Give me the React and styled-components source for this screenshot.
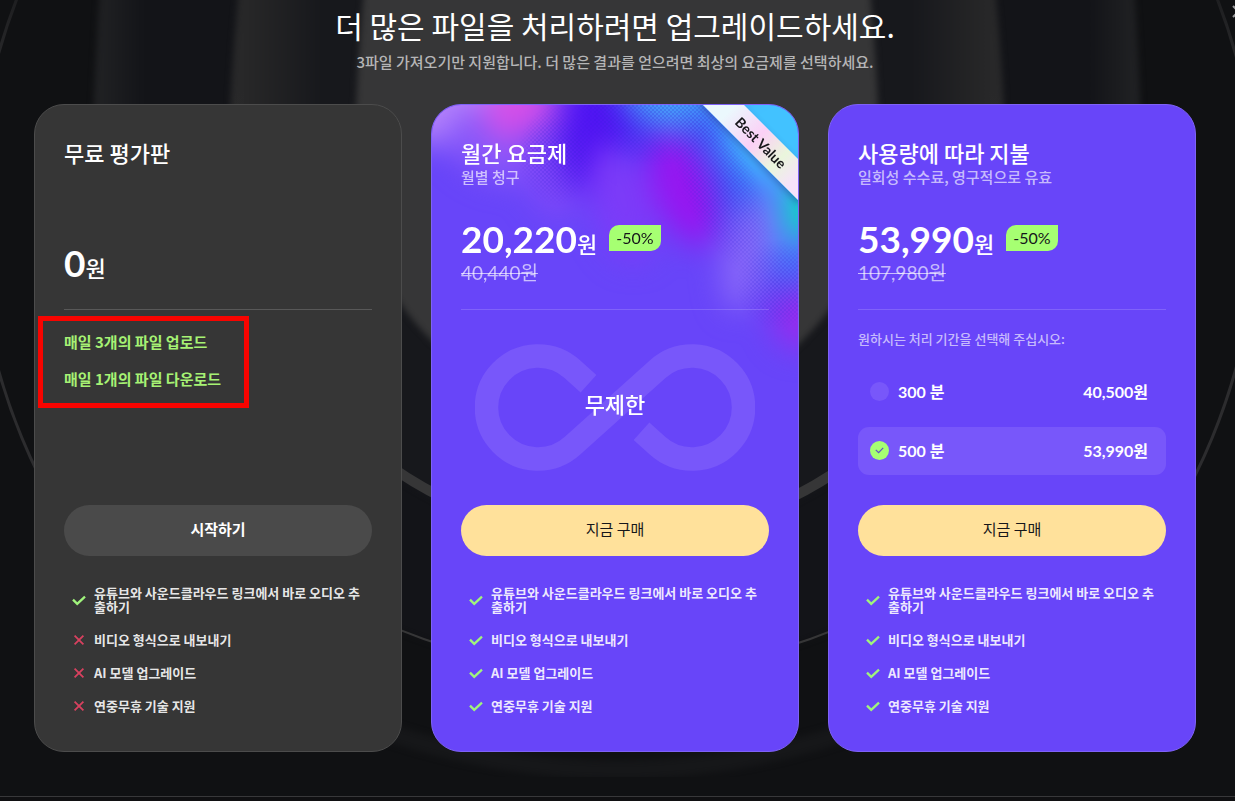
import { useState } from "react";
import styled, { createGlobalStyle, css } from "styled-components";

const GlobalStyle = createGlobalStyle`
    * {
        box-sizing: border-box;
        margin: 0;
        padding: 0;
    }

    body {
        background-color: #101012;
        font-family: "Noto Sans CJK KR", "Noto Sans", sans-serif;
        font-weight: 500;
        color: #fff;
        overflow-x: hidden;
    }

    ul {
        list-style: none;
    }

    button {
        font-family: inherit;
        border: 0;
        cursor: pointer;
    }
`;

const numberFont = css`
    font-family: Lato, "Noto Sans CJK KR", sans-serif;
`;

const Page = styled.main`
    position: relative;
    overflow: hidden;
    padding: 5px 39px 44px 34px;
    border-bottom: 1px solid #38383a;
`;

const Backdrop = styled.svg`
    position: absolute;
    top: 0;
    left: 0;
    width: 100%;
    height: 100%;
    z-index: -1;
`;

const CloseButton = styled.button`
    position: absolute;
    top: 4px;
    right: -11px;
    width: 14px;
    height: 14px;
    background: none;
    color: #9a9a9c;

    svg {
        display: block;
    }
`;

const Header = styled.header`
    text-align: center;
    margin-bottom: 32px;

    h1 {
        font-size: 30px;
        line-height: 40px;
        font-weight: 400;
    }

    p {
        margin-top: 7px;
        font-size: 15px;
        line-height: 20px;
        color: #b5b5b6;
    }
`;

const Plans = styled.div`
    display: grid;
    grid-template-columns: repeat(auto-fit, minmax(300px, 1fr));
    gap: 29px;
`;

const Card = styled.section`
    position: relative;
    display: flex;
    flex-direction: column;
    overflow: hidden;
    padding: 33px 29px 38px;
    border: 1px solid ${(props) => (props.$paid ? "#7e62f6" : "#4c4c4c")};
    border-radius: 30px;
    background-color: ${(props) => (props.$paid ? "#6845f9" : "#363636")};
`;

const GlowArt = styled.svg`
    position: absolute;
    top: 0;
    right: 0;
`;

const CardHead = styled.div`
    position: relative;
    display: flex;
    flex-direction: column;
    justify-content: space-between;
    min-height: 172px;
    padding-bottom: 24px;
    border-bottom: 1px solid ${(props) => (props.$paid ? "rgba(255, 255, 255, 0.16)" : "#585858")};

    h2 {
        font-size: 22px;
        line-height: 29px;
        font-weight: 500;
    }

    .desc {
        font-size: 15px;
        line-height: 20px;
        color: rgba(255, 255, 255, 0.65);
    }
`;

const Price = styled.div`
    ${numberFont}

    .now {
        display: flex;
        align-items: baseline;
        line-height: 32px;
    }

    strong {
        font-size: 37px;
        font-weight: 700;
    }

    .won {
        font-size: 22px;
    }

    del {
        display: block;
        font-size: 19px;
        line-height: 24px;
        font-weight: 400;
        color: rgba(255, 255, 255, 0.65);
    }
`;

const Discount = styled.span`
    align-self: flex-start;
    margin: 2px 0 0 12px;
    padding: 0 7px;
    border-radius: 10px 0;
    background-color: #a6ff72;
    color: #16161a;
    font-size: 16px;
    line-height: 26px;
    font-weight: 400;
`;

const Ribbon = styled.span`
    position: absolute;
    top: 23px;
    right: -33px;
    width: 140px;
    height: 29px;
    transform: rotate(45deg);
    background: linear-gradient(90deg, #ebf8fd 18%, #fbd0f6 46%, #eaf6dc 68%, #f6e2fa 86%);
    box-shadow: 0 3px 6px rgba(40, 20, 120, 0.35);
    color: #17171a;
    font-family: Lato, sans-serif;
    font-size: 14px;
    line-height: 29px;
    font-weight: 700;
    text-align: center;
`;

const CardBody = styled.div`
    position: relative;
    min-height: 195px;
`;

const Usage = styled.ul`
    position: relative;
    width: fit-content;
    margin-top: 22px;
    display: grid;
    gap: 17px;
    font-size: 15px;
    line-height: 20px;
    font-weight: 700;
    color: #a6f274;

    /* highlight frame around the daily limits */
    &::after {
        content: "";
        position: absolute;
        inset: -16px -28px -19px -26px;
        border: 5px solid #f80400;
    }
`;

const Unlimited = styled.div`
    display: grid;
    place-items: center;
    height: 195px;

    svg,
    p {
        grid-area: 1 / 1;
    }

    p {
        padding-bottom: 10px;
        font-size: 22px;
        line-height: 28px;
    }
`;

const Options = styled.fieldset`
    border: 0;
    padding-top: 19px;
    display: grid;
    gap: 11px;

    .legend {
        margin-bottom: 8px;
        font-size: 13px;
        line-height: 20px;
        color: rgba(255, 255, 255, 0.65);
    }
`;

const Option = styled.label`
    display: flex;
    align-items: center;
    gap: 9px;
    height: 48px;
    padding: 0 18px 2px 12px;
    border-radius: 11px;
    background-color: ${(props) => (props.$active ? "#7857fa" : "transparent")};
    ${numberFont}
    font-size: 16px;
    font-weight: 700;
    cursor: pointer;

    .cost {
        margin-left: auto;
    }
`;

const Radio = styled.span`
    display: grid;
    place-items: center;

    input {
        grid-area: 1 / 1;
        appearance: none;
        width: 19px;
        height: 19px;
        border-radius: 50%;
        background-color: #7857fa;

        &:checked {
            background-color: #a6ff72;
        }
    }

    svg {
        grid-area: 1 / 1;
        pointer-events: none;
    }
`;

const BuyButton = styled.button`
    position: relative;
    height: 51px;
    padding-bottom: 4px;
    border-radius: 26px;
    background-color: ${(props) => (props.$paid ? "#ffe19b" : "#4a4a4a")};
    color: ${(props) => (props.$paid ? "#16161a" : "#fff")};
    font-size: 15px;
    font-weight: ${(props) => (props.$paid ? 400 : 700)};

    &:hover {
        opacity: 0.9;
    }
`;

const Features = styled.ul`
    position: relative;
    margin-top: 30px;
    padding: 0 8px;
    display: grid;
    gap: 19px;

    li {
        display: flex;
        align-items: center;
        gap: 8px;
        font-size: 13px;
        line-height: 14px;
        font-weight: 700;
        color: rgba(255, 255, 255, 0.9);
    }

    svg {
        flex: none;
    }
`;

const CheckIcon = () => (
    <svg width="14" height="12" viewBox="0 0 14 12" fill="none" aria-hidden="true">
        <path d="M1 5.6L5.2 9.8L13 2.6" stroke="#a0f47c" strokeWidth="2.3" />
    </svg>
);

const CrossIcon = () => (
    <svg width="14" height="12" viewBox="0 0 14 12" fill="none" aria-hidden="true">
        <path d="M2.6 1.6L11.4 10.4M11.4 1.6L2.6 10.4" stroke="#d8415f" strokeWidth="1.8" />
    </svg>
);

const Infinity = () => (
    <svg width="280" height="127" viewBox="0 0 280 127" fill="none" aria-hidden="true">
        <path
            d="M113.5 39.8L97.4 25.2A51.5 51.5 0 1 0 97.4 101.8L182.6 25.2A51.5 51.5 0 1 1 182.6 101.8L166.5 87.3"
            stroke="#7857fa"
            strokeWidth="23.5"
        />
    </svg>
);

const Glow = () => (
    <GlowArt width="366" height="290" viewBox="0 0 366 290" aria-hidden="true">
        <defs>
            <filter id="glowBlur" x="-80" y="-80" width="540" height="460" filterUnits="userSpaceOnUse" colorInterpolationFilters="sRGB">
                <feGaussianBlur stdDeviation="15" />
            </filter>
            <pattern id="dots" width="4" height="4" patternUnits="userSpaceOnUse">
                <circle cx="1" cy="1" r="1" fill="#2a1ed0" />
                <circle cx="3" cy="3" r="1" fill="#2a1ed0" />
            </pattern>
            <radialGradient id="dotFade">
                <stop offset="0" stopColor="#fff" stopOpacity="0.3" />
                <stop offset="0.6" stopColor="#fff" stopOpacity="0.2" />
                <stop offset="1" stopColor="#fff" stopOpacity="0" />
            </radialGradient>
            <mask id="dotMask">
                <ellipse cx="225" cy="10" rx="85" ry="50" fill="url(#dotFade)" />
                <ellipse cx="290" cy="85" rx="38" ry="95" transform="rotate(-24 290 85)" fill="url(#dotFade)" />
                <ellipse cx="345" cy="180" rx="42" ry="45" fill="url(#dotFade)" />
                <ellipse cx="125" cy="50" rx="40" ry="50" fill="url(#dotFade)" />
            </mask>
        </defs>
        <g filter="url(#glowBlur)">
            <ellipse cx="25" cy="-4" rx="84" ry="44" fill="#b684fb" />
            <ellipse cx="60" cy="40" rx="50" ry="30" transform="rotate(30 60 40)" fill="#8a58f9" />
            <ellipse cx="88" cy="4" rx="36" ry="34" fill="#d64fe8" />
            <ellipse cx="116" cy="66" rx="24" ry="50" transform="rotate(-20 116 66)" fill="#7f48f8" />
            <ellipse cx="166" cy="16" rx="38" ry="74" transform="rotate(10 166 16)" fill="#5014f3" />
            <ellipse cx="190" cy="98" rx="30" ry="60" transform="rotate(-16 190 98)" fill="#7c3bf8" />
            <ellipse cx="222" cy="30" rx="26" ry="34" fill="#4a3cf6" />
            <ellipse cx="250" cy="-8" rx="64" ry="34" transform="rotate(14 250 -8)" fill="#45a8fb" />
            <ellipse cx="300" cy="80" rx="36" ry="84" transform="rotate(-26 300 80)" fill="#4060f8" />
            <ellipse cx="252" cy="84" rx="30" ry="60" transform="rotate(-22 252 84)" fill="#9616f0" />
            <ellipse cx="352" cy="20" rx="60" ry="60" fill="#42c2ff" />
            <ellipse cx="352" cy="118" rx="28" ry="50" transform="rotate(-20 352 118)" fill="#4f8afb" />
            <ellipse cx="376" cy="104" rx="20" ry="28" fill="#00e6b8" />
            <ellipse cx="314" cy="150" rx="22" ry="56" transform="rotate(10 314 150)" fill="#8868f8" />
            <ellipse cx="364" cy="168" rx="24" ry="24" fill="#4a6cfa" />
            <ellipse cx="372" cy="212" rx="32" ry="32" fill="#942cee" />
        </g>
        <rect width="366" height="290" fill="url(#dots)" mask="url(#dotMask)" />
    </GlowArt>
);

const Rings = () => (
    <Backdrop viewBox="0 0 1235 796" preserveAspectRatio="none" aria-hidden="true">
        <defs>
            <linearGradient id="ring3">
                <stop offset="0" stopColor="#222325" />
                <stop offset="0.05" stopColor="#131418" />
                <stop offset="0.95" stopColor="#131418" />
                <stop offset="1" stopColor="#222325" />
            </linearGradient>
            <linearGradient id="ring2">
                <stop offset="0" stopColor="#2a2a2b" />
                <stop offset="0.03" stopColor="#262627" />
                <stop offset="0.12" stopColor="#17181c" />
                <stop offset="0.88" stopColor="#17181c" />
                <stop offset="0.97" stopColor="#262627" />
                <stop offset="1" stopColor="#2a2a2b" />
            </linearGradient>
            <linearGradient id="edge" x2="0" y2="1">
                <stop offset="0.4" stopColor="#363637" stopOpacity="0" />
                <stop offset="0.75" stopColor="#363637" />
            </linearGradient>
            <linearGradient id="outer" x2="0" y2="1">
                <stop offset="0.25" stopColor="#2c2c2e" stopOpacity="0" />
                <stop offset="0.4" stopColor="#2c2c2e" />
                <stop offset="0.75" stopColor="#2c2c2e" />
                <stop offset="0.92" stopColor="#2c2c2e" stopOpacity="0" />
            </linearGradient>
            <filter id="soft" x="-5%" y="-5%" width="110%" height="110%" colorInterpolationFilters="sRGB">
                <feGaussianBlur stdDeviation="3" />
            </filter>
        </defs>
        <rect width="1235" height="796" fill="#101113" />
        <ellipse cx="617" cy="212" rx="640" ry="614" fill="none" stroke="url(#outer)" strokeWidth="3" />
        <path d="M190 640Q617 900 1044 640" fill="none" stroke="#161719" strokeWidth="18" filter="url(#soft)" />
        <path d="M102 -40Q92 100 92 202A525 470 0 0 0 1142 202Q1142 100 1132 -40Z" fill="url(#ring3)" filter="url(#soft)" />
        <ellipse cx="617" cy="202" rx="525" ry="470" fill="none" stroke="url(#edge)" strokeWidth="2" />
        <path d="M242 -40Q229 80 229 166A388 377 0 0 0 1005 166Q1005 80 992 -40Z" fill="url(#ring2)" filter="url(#soft)" />
        <ellipse cx="617" cy="166" rx="384" ry="372" fill="none" stroke="url(#edge)" strokeWidth="10" />
        <path d="M367 -40Q355 80 355 159A262 257 0 0 0 879 159Q879 80 867 -40Z" fill="#363637" filter="url(#soft)" />
    </Backdrop>
);

const featureNames = [
    "유튜브와 사운드클라우드 링크에서 바로 오디오 추출하기",
    "비디오 형식으로 내보내기",
    "AI 모델 업그레이드",
    "연중무휴 기술 지원",
];

const minutes = [
    { value: "300", cost: "40,500원" },
    { value: "500", cost: "53,990원" },
];

const PlanCard = (props) => {
    return (
        <Card $paid={props.paid}>
            {props.best && <Glow />}
            {props.best && <Ribbon>Best Value</Ribbon>}
            <CardHead $paid={props.paid}>
                <div>
                    <h2>{props.title}</h2>
                    {props.desc && <p className="desc">{props.desc}</p>}
                </div>
                <Price>
                    <div className="now">
                        <strong>{props.price}</strong>
                        <span className="won">원</span>
                        {props.oldPrice && <Discount>-50%</Discount>}
                    </div>
                    {props.oldPrice && <del>{props.oldPrice}원</del>}
                </Price>
            </CardHead>
            <CardBody>{props.children}</CardBody>
            <BuyButton type="button" $paid={props.paid}>{props.button}</BuyButton>
            <Features>
                {featureNames.map((name, i) => (
                    <li key={name}>
                        {props.paid || i === 0 ? <CheckIcon /> : <CrossIcon />}
                        <span>{name}</span>
                    </li>
                ))}
            </Features>
        </Card>
    );
};

const App = () => {
    const [selected, setSelected] = useState("500");

    return (
        <>
            <GlobalStyle />
            <Page>
                <Rings />
                <CloseButton type="button" aria-label="닫기">
                    <svg width="14" height="14" viewBox="0 0 14 14" fill="none">
                        <path d="M1 2L12 13M12 2L1 13" stroke="currentColor" strokeWidth="2" />
                    </svg>
                </CloseButton>
                <Header>
                    <h1>더 많은 파일을 처리하려면 업그레이드하세요.</h1>
                    <p>3파일 가져오기만 지원합니다. 더 많은 결과를 얻으려면 최상의 요금제를 선택하세요.</p>
                </Header>
                <Plans>
                    <PlanCard title="무료 평가판" price="0" button="시작하기">
                        <Usage>
                            <li>매일 3개의 파일 업로드</li>
                            <li>매일 1개의 파일 다운로드</li>
                        </Usage>
                    </PlanCard>
                    <PlanCard paid best title="월간 요금제" desc="월별 청구" price="20,220" oldPrice="40,440" button="지금 구매">
                        <Unlimited>
                            <Infinity />
                            <p>무제한</p>
                        </Unlimited>
                    </PlanCard>
                    <PlanCard paid title="사용량에 따라 지불" desc="일회성 수수료, 영구적으로 유효" price="53,990" oldPrice="107,980" button="지금 구매">
                        <Options aria-labelledby="minutes-label">
                            <p className="legend" id="minutes-label">원하시는 처리 기간을 선택해 주십시오:</p>
                            {minutes.map((item) => (
                                <Option key={item.value} $active={selected === item.value}>
                                    <Radio>
                                        <input
                                            type="radio"
                                            name="minutes"
                                            value={item.value}
                                            checked={selected === item.value}
                                            onChange={() => setSelected(item.value)}
                                        />
                                        {selected === item.value && (
                                            <svg width="9" height="8" viewBox="0 0 9 8" fill="none" aria-hidden="true">
                                                <path d="M0.8 3.8L3.6 6.6L8.2 1.8" stroke="#5f52c4" strokeWidth="1.2" />
                                            </svg>
                                        )}
                                    </Radio>
                                    <span>{item.value} 분</span>
                                    <span className="cost">{item.cost}</span>
                                </Option>
                            ))}
                        </Options>
                    </PlanCard>
                </Plans>
            </Page>
        </>
    );
};

export default App;
